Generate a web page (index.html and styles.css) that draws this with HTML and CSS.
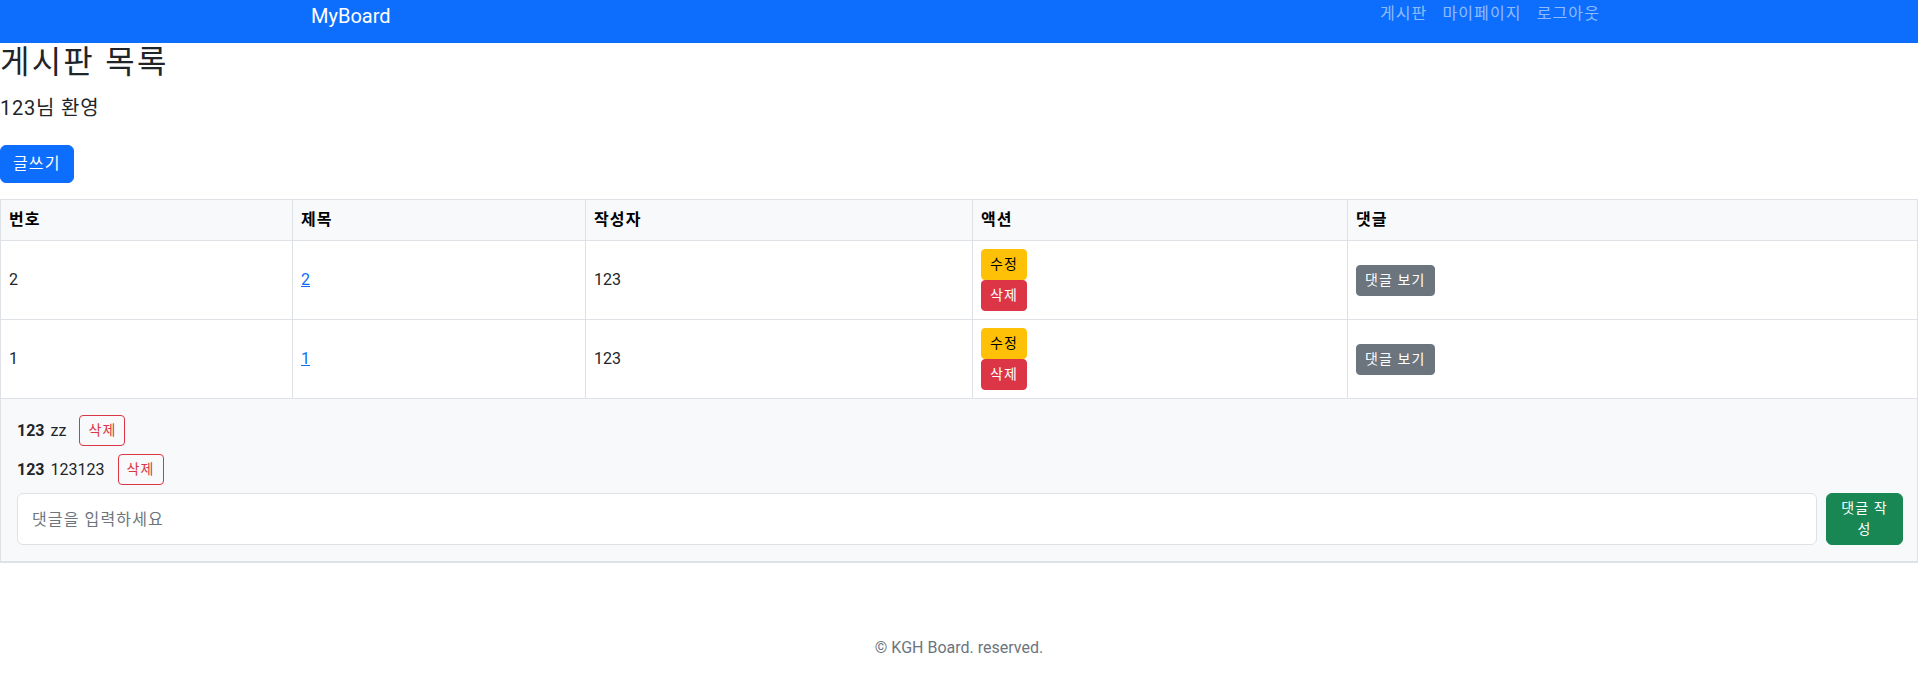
FILE: index.html
```html
<!DOCTYPE html>
<html lang="ko">
<head>
<meta charset="utf-8">
<title>MyBoard</title>
<link rel="stylesheet" href="styles.css">
</head>
<body>
<nav class="navbar">
  <div class="nav-inner">
    <a class="brand" href="#">MyBoard</a>
    <ul class="nav-links">
      <li><a href="#">게시판</a></li>
      <li><a href="#">마이페이지</a></li>
      <li><a href="#">로그아웃</a></li>
    </ul>
  </div>
</nav>

<main class="main">
  <h2 class="title">게시판 목록</h2>
  <p class="welcome">123님 환영</p>
  <button class="btn btn-primary write-btn">글쓰기</button>

  <table class="board">
    <colgroup>
      <col class="c1"><col class="c2"><col class="c3"><col class="c4"><col class="c5">
    </colgroup>
    <thead>
      <tr><th>번호</th><th>제목</th><th>작성자</th><th>액션</th><th>댓글</th></tr>
    </thead>
    <tbody>
      <tr>
        <td>2</td>
        <td><a class="post-link" href="#">2</a></td>
        <td>123</td>
        <td><div class="actions"><button class="btn-sm btn-warning">수정</button><button class="btn-sm btn-danger">삭제</button></div></td>
        <td><button class="btn-sm btn-secondary">댓글 보기</button></td>
      </tr>
      <tr>
        <td>1</td>
        <td><a class="post-link" href="#">1</a></td>
        <td>123</td>
        <td><div class="actions"><button class="btn-sm btn-warning">수정</button><button class="btn-sm btn-danger">삭제</button></div></td>
        <td><button class="btn-sm btn-secondary">댓글 보기</button></td>
      </tr>
      <tr class="comment-row">
        <td colspan="5">
          <div class="comment-box">
            <div class="comment"><strong>123</strong><span class="comment-text">zz</span><button class="btn-sm btn-outline-danger">삭제</button></div>
            <div class="comment"><strong>123</strong><span class="comment-text">123123</span><button class="btn-sm btn-outline-danger">삭제</button></div>
            <form class="comment-form">
              <input class="comment-input" type="text" placeholder="댓글을 입력하세요">
              <button class="btn-sm btn-success submit-btn" type="button">댓글 작성</button>
            </form>
          </div>
        </td>
      </tr>
    </tbody>
  </table>
</main>

<footer class="footer">© KGH Board. reserved.</footer>
</body>
</html>
```

FILE: styles.css
```css
* { box-sizing: border-box; }

body {
  margin: 0;
  font-family: Roboto, "Noto Sans CJK KR", sans-serif;
  font-size: 16px;
  line-height: 1.5;
  color: #212529;
  background: #fff;
}

.navbar {
  background: #0d6efd;
  height: 43px;
}

.nav-inner {
  width: 1320px;
  margin: 0 auto;
  padding: 0 12px;
  display: flex;
  justify-content: space-between;
  align-items: flex-start;
}

.brand {
  color: #fff;
  text-decoration: none;
  font-size: 20px;
  line-height: 30px;
  padding-top: 1px;
}

.nav-links {
  list-style: none;
  margin: 0;
  padding: 2px 0 0;
  display: flex;
  letter-spacing: 0.07em;
}

.nav-links a {
  display: block;
  padding: 0 7px 0 8px;
  line-height: 24px;
  color: rgba(255, 255, 255, 0.55);
  text-decoration: none;
}

.title {
  font-size: 32px;
  font-weight: 400;
  line-height: 1.2;
  margin: 0 0 8px;
  letter-spacing: 0.07em;
}

.welcome {
  font-size: 20px;
  line-height: 30px;
  margin: 12px 0 22px;
  letter-spacing: 0.04em;
}

.btn {
  font-family: inherit;
  font-size: 16px;
  line-height: 24px;
  padding: 6px 12px;
  border: 1px solid transparent;
  border-radius: 6px;
  cursor: pointer;
  letter-spacing: 0.07em;
}

.btn-primary {
  background: #0d6efd;
  border-color: #0d6efd;
  color: #fff;
}

.write-btn {
  display: block;
  margin-bottom: 16px;
}

.board {
  width: 100%;
  border-collapse: collapse;
}

.c1 { width: 292px; }
.c2 { width: 293px; }
.c3 { width: 387px; }
.c4 { width: 375px; }

.board th,
.board td {
  border: 1px solid #dee2e6;
  padding: 8px;
  text-align: left;
  vertical-align: middle;
}

.board th {
  background: #f8f9fa;
  font-weight: 700;
  color: #000;
  letter-spacing: 0.07em;
}

.post-link {
  color: #0d6efd;
  text-decoration: underline;
}

.actions {
  display: flex;
  flex-direction: column;
  align-items: flex-start;
}

.btn-sm {
  font-family: inherit;
  font-size: 14px;
  line-height: 21px;
  padding: 4px 8px;
  border: 1px solid transparent;
  border-radius: 4px;
  cursor: pointer;
  letter-spacing: 0.08em;
}

.btn-warning { background: #ffc107; border-color: #ffc107; color: #000; }
.btn-danger { background: #dc3545; border-color: #dc3545; color: #fff; }
.btn-secondary { background: #6c757d; border-color: #6c757d; color: #fff; }
.btn-success { background: #198754; border-color: #198754; color: #fff; }
.btn-outline-danger { background: transparent; border-color: #dc3545; color: #dc3545; }

.comment-row td {
  background: #f8f9fa;
  border-bottom: 2px solid #dee2e6;
}

.comment-box {
  padding: 8px 6px 8px 8px;
}

.comment {
  display: flex;
  align-items: center;
  margin-bottom: 8px;
}

.comment-text {
  margin-left: 6px;
}

.comment .btn-outline-danger {
  margin-left: 13px;
}

.comment-form {
  display: flex;
  gap: 9px;
  margin: 0;
}

.comment-input {
  flex: 1;
  font-family: inherit;
  font-size: 16px;
  padding: 6px 14px;
  border: 1px solid #dee2e6;
  border-radius: 6px;
  background: #fff;
  color: #212529;
  letter-spacing: 0.07em;
}

.comment-input::placeholder {
  color: #6c757d;
}

.submit-btn {
  width: 77px;
  padding: 4px 12px;
  white-space: normal;
  border-radius: 6px;
}

.footer {
  text-align: center;
  color: #6c757d;
  margin-top: 73px;
  line-height: 24px;
}
```
